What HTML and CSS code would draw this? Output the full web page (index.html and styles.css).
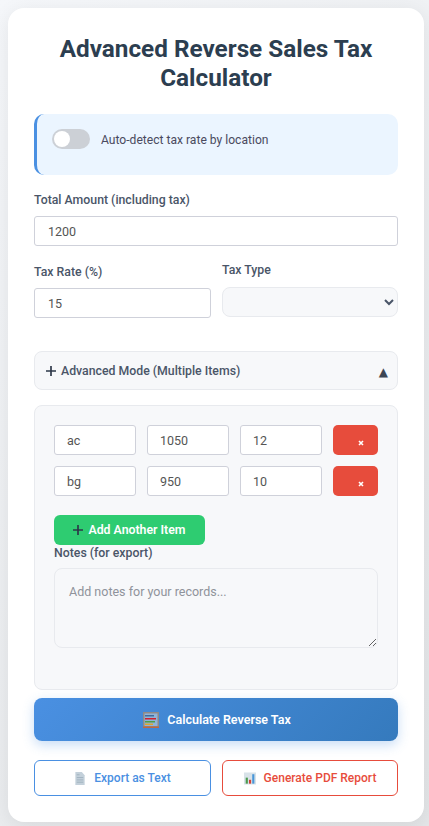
FILE: index.html
```html
<!DOCTYPE html>
<html>
<head>
    <meta charset="utf-8">
    <meta name="viewport" content="width=device-width, initial-scale=1.0">
    <title>Advanced Reverse Sales Tax Calculator</title>
    <link rel="stylesheet" href="styles.css">
</head>
<body>

<div class="card">

    <h1 class="title">Advanced Reverse Sales Tax Calculator</h1>

    <div class="location-box">
        <span class="toggle"><span class="toggle-knob"></span></span>
        <span class="location-label">Auto-detect tax rate by location</span>
    </div>

    <div class="field total-field">
        <label class="field-label">Total Amount (including tax)</label>
        <input type="text" class="text-input" value="1200">
    </div>

    <div class="tax-row">
        <div class="field rate-field">
            <label class="field-label">Tax Rate (%)</label>
            <input type="text" class="text-input" value="15">
        </div>
        <div class="field">
            <label class="field-label type-label">Tax Type</label>
            <select class="tax-select"></select>
        </div>
    </div>

    <div class="advanced-toggle">
        <svg class="plus-icon" viewBox="0 0 12 12"><path d="M6 0v12M0 6h12"/></svg>
        <span class="advanced-label">Advanced Mode (Multiple Items)</span>
        <span class="advanced-arrow">▲</span>
    </div>

    <div class="items-panel">

        <div class="item-row">
            <input type="text" class="item-input" value="ac">
            <input type="text" class="item-input" value="1050">
            <input type="text" class="item-input" value="12">
            <button class="remove-button"><svg class="remove-icon" viewBox="0 0 6 6"><path d="M1 1l4 4M5 1L1 5"/></svg></button>
        </div>

        <div class="item-row">
            <input type="text" class="item-input" value="bg">
            <input type="text" class="item-input" value="950">
            <input type="text" class="item-input" value="10">
            <button class="remove-button"><svg class="remove-icon" viewBox="0 0 6 6"><path d="M1 1l4 4M5 1L1 5"/></svg></button>
        </div>

        <button class="add-button">
            <svg class="plus-icon" viewBox="0 0 12 12"><path d="M6 0v12M0 6h12"/></svg>
            Add Another Item
        </button>

        <label class="field-label notes-label">Notes (for export)</label>
        <textarea class="notes-input" placeholder="Add notes for your records..."></textarea>

    </div>

    <button class="calculate-button">
        <svg class="abacus-icon" viewBox="0 0 16 16">
            <rect x="0" y="0" width="16" height="16" fill="#8f8a86"/>
            <rect x="1.5" y="1.5" width="13" height="12.5" fill="#8fb4d8"/>
            <rect x="2" y="3" width="9" height="1.5" fill="#3f6c9c"/>
            <rect x="2" y="6" width="11" height="1.5" fill="#d0202f"/>
            <rect x="2" y="9" width="10" height="1.5" fill="#4f9e48"/>
            <rect x="2" y="11.5" width="8" height="1.5" fill="#e0a42c"/>
            <rect x="0" y="14.5" width="16" height="1.5" fill="#c0683f"/>
        </svg>
        Calculate Reverse Tax
    </button>

    <div class="export-row">
        <button class="export-button export-text">
            <svg class="export-icon" viewBox="0 0 12 14">
                <path d="M1 0h7l3 3.5V14H1z" fill="#c3d0da"/>
                <path d="M2.5 3h3M2.5 6h7M2.5 8.5h7M2.5 11h7" stroke="#9fb0bd" fill="none"/>
            </svg>
            Export as Text
        </button>
        <button class="export-button export-pdf">
            <svg class="export-icon" viewBox="0 0 14 14">
                <rect width="14" height="14" fill="#d8e2e8"/>
                <rect x="2" y="6" width="2.5" height="7" fill="#4c9a4e"/>
                <rect x="5.8" y="8.5" width="2.5" height="4.5" fill="#d2413a"/>
                <rect x="9.6" y="2" width="2.5" height="11" fill="#4a96d8"/>
            </svg>
            Generate PDF Report
        </button>
    </div>

</div>

</body>
</html>
```

FILE: styles.css
```css
* {
    font-family: Roboto, "Noto Sans", sans-serif;
    box-sizing: border-box;
}

body {
    margin: 0;
    padding: 8px 5px 4px 8px;
    background: linear-gradient(135deg, #f5f7fa, #e4e6e8);
    height: 826px;
    overflow: hidden;
}

.card {
    height: 814px;
    padding: 26px;
    background: #fff;
    border-radius: 16px;
    box-shadow: 0 4px 20px rgba(0, 0, 0, 0.08);
}

.title {
    margin: 0 0 22px;
    font-size: 24.3px;
    line-height: 29px;
    font-weight: 700;
    color: #2c3e50;
    text-align: center;
}

.location-box {
    display: flex;
    align-items: flex-start;
    height: 61px;
    padding: 15px 15px;
    background: #ebf5ff;
    border-left: 3px solid #4a90e2;
    border-radius: 10px;
}

.toggle {
    width: 38px;
    height: 20px;
    padding: 2px;
    background: #ccd0d6;
    border-radius: 10px;
}

.toggle-knob {
    display: block;
    width: 16px;
    height: 16px;
    background: #fff;
    border-radius: 50%;
}

.location-label {
    margin-left: 11px;
    font-size: 12.1px;
    line-height: 22px;
    color: #4a4a5e;
}

.field {
    display: flex;
    flex-direction: column;
}

.total-field {
    margin-top: 16px;
}

.field-label {
    margin-bottom: 6px;
    font-size: 12.3px;
    line-height: 19px;
    font-weight: 500;
    color: #4a5568;
}

.type-label {
    margin-bottom: 7px;
}

.text-input {
    width: 100%;
    height: 30px;
    padding: 0 13px;
    font-size: 12.5px;
    color: #555;
    background: #fff;
    border: 1px solid #cfd1da;
    border-radius: 3px;
    outline: none;
}

.tax-row {
    display: grid;
    grid-template-columns: 177px 176px;
    gap: 11px;
    margin-top: 15px;
}

.rate-field {
    padding-top: 2px;
}

.tax-select {
    width: 100%;
    height: 30px;
    background-color: #f7f8fa;
    border: 1px solid #e8eaee;
    border-radius: 8px;
    color: #4a5568;
    outline: none;
}

.advanced-toggle {
    display: flex;
    align-items: center;
    height: 39px;
    margin-top: 33px;
    padding: 0 9px 0 11px;
    background: #f7f8fa;
    border: 1px solid #e8eaee;
    border-radius: 8px;
}

.plus-icon {
    width: 10px;
    height: 10px;
    fill: none;
    stroke: #2d3748;
    stroke-width: 2;
}

.advanced-label {
    flex: 1;
    margin-left: 5px;
    font-size: 12.3px;
    font-weight: 500;
    color: #4a5568;
}

.advanced-arrow {
    padding-top: 2px;
    font-family: "DejaVu Sans", sans-serif;
    font-size: 12px;
    color: #3c4654;
}

.items-panel {
    display: flex;
    flex-direction: column;
    align-items: flex-start;
    height: 285px;
    margin-top: 15px;
    padding: 19px;
    background: #f7f8fa;
    border: 1px solid #e8eaee;
    border-radius: 8px;
}

.item-row {
    display: flex;
    gap: 11px;
    margin-bottom: 11px;
}

.item-input {
    width: 82px;
    height: 30px;
    padding: 0 12px;
    font-size: 12.5px;
    color: #555;
    background: #fff;
    border: 1px solid #cfd1da;
    border-radius: 3px;
    outline: none;
}

.remove-button {
    display: flex;
    align-items: flex-end;
    justify-content: center;
    width: 45px;
    height: 30px;
    padding: 0 0 9px 10px;
    background: #e74c3c;
    border: none;
    border-radius: 5px;
}

.remove-icon {
    width: 6px;
    height: 6px;
    fill: none;
    stroke: #fff;
    stroke-width: 1.6;
}

.add-button {
    display: flex;
    align-items: center;
    justify-content: center;
    gap: 5px;
    width: 151px;
    height: 30px;
    margin-top: 8px;
    padding: 0;
    font-size: 12.3px;
    font-weight: 600;
    color: #fff;
    background: #2ecc71;
    border: none;
    border-radius: 6px;
}

.notes-label {
    margin: 0 0 7px;
    line-height: 16px;
}

.notes-input {
    width: 324px;
    height: 80px;
    padding: 15px 14px;
    font-size: 12.5px;
    background: #f7f8fa;
    border: 1px solid #e8eaee;
    border-radius: 8px;
    outline: none;
}

.notes-input::placeholder {
    color: #8f939b;
}

.calculate-button {
    display: flex;
    align-items: center;
    justify-content: center;
    gap: 8px;
    width: 100%;
    height: 43px;
    margin-top: 8px;
    padding: 0 0 0 2px;
    font-size: 12.5px;
    font-weight: 600;
    color: #fff;
    background: linear-gradient(135deg, #4a90e2, #357abd);
    border: none;
    border-radius: 8px;
    box-shadow: 0 4px 12px rgba(74, 144, 226, 0.3);
}

.abacus-icon {
    width: 16px;
    height: 16px;
}

.export-row {
    display: grid;
    grid-template-columns: 177px 176px;
    gap: 11px;
    margin-top: 19px;
}

.export-button {
    display: flex;
    align-items: center;
    justify-content: center;
    gap: 8px;
    height: 36px;
    padding: 0;
    font-size: 12px;
    font-weight: 500;
    background: #fff;
    border-radius: 6px;
}

.export-text {
    color: #4a90e2;
    border: 1px solid #4a90e2;
}

.export-pdf {
    color: #e74c3c;
    border: 1px solid #e74c3c;
}

.export-icon {
    height: 13px;
    width: 12px;
}
```
